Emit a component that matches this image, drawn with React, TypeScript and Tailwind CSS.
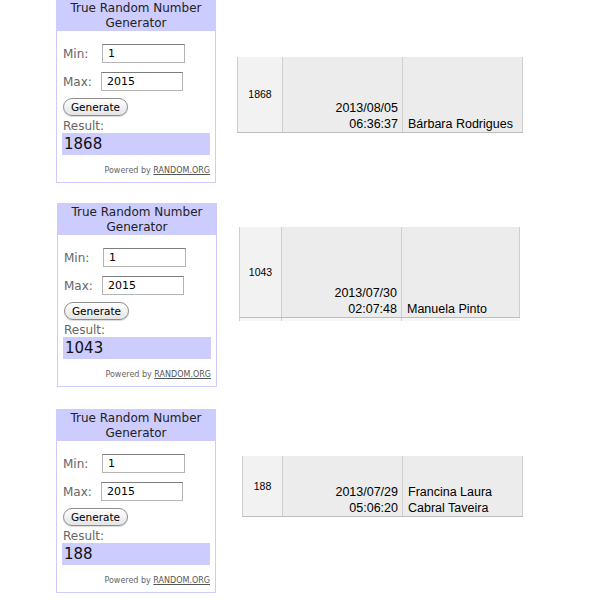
import React from "react";

type W = { min: string; max: string; result: string; minLbl: number; maxLbl: number };

function Widget({ min, max, result, minLbl, maxLbl }: W) {
  return (
    <div className="w-[160px] h-[184px] border border-[#ccccff] bg-white flex flex-col font-['DejaVu_Sans',sans-serif] shrink-0">
      <div className="bg-[#ccccff] h-[31px] pt-[1px] text-center text-[12px] leading-[15px] text-[#222]">
        True Random Number
        <br />
        Generator
      </div>
      <div className="flex items-center pl-[6px] mt-[13px] h-[19px]">
        <div className="text-[12px] text-[#666] shrink-0" style={{ width: minLbl }}>
          Min:
        </div>
        <div className="w-[83px] h-[19px] border border-[#b4b4b4] border-t-[#7d7d7d] bg-white text-[11px] leading-[17px] pl-[5px] text-black">
          {min}
        </div>
      </div>
      <div className="flex items-center pl-[6px] mt-[9px] h-[19px]">
        <div className="text-[12px] text-[#666] shrink-0" style={{ width: maxLbl }}>
          Max:
        </div>
        <div className="w-[82px] h-[19px] border border-[#b4b4b4] border-t-[#7d7d7d] bg-white text-[11px] leading-[17px] pl-[5px] text-black">
          {max}
        </div>
      </div>
      <div className="pl-[6px] mt-[7px]">
        <div className="w-[65px] h-[18px] rounded-full border border-[#8e8e8e] bg-gradient-to-b from-white to-[#e4e4e4] text-center text-[10.5px] leading-[16px] text-black shadow-[0_1px_1px_rgba(0,0,0,0.15)]">
          Generate
        </div>
      </div>
      <div className="pl-[6px] mt-[3px] text-[12px] leading-[14px] text-[#666]">Result:</div>
      <div className="ml-[5px] w-[148px] h-[22px] bg-[#ccccff] text-[15px] leading-[22px] pl-[2px] text-[#111]">
        {result}
      </div>
      <div className="ml-[5px] w-[148px] mt-[11px] text-right text-[8px] leading-[10px] text-[#666]">
        Powered by <span className="underline text-[#555]">RANDOM.ORG</span>
      </div>
    </div>
  );
}

type T = {
  num: string;
  date: string;
  time: string;
  name: React.ReactNode;
  c1: number;
  c3: number;
  h: number;
  stub?: boolean;
};

function Sheet({ num, date, time, name, c1, c3, h, stub }: T) {
  return (
    <div className="flex flex-col font-['Liberation_Sans',Arial,sans-serif] text-black">
      <div className="flex border-b border-[#bdbdbd]" style={{ height: h + 1 }}>
        <div
          className="border-l border-r border-[#cfcfcf] bg-[#f2f2f2] flex items-center justify-center text-[10.5px] pt-[1px]"
          style={{ width: c1 }}
        >
          {num}
        </div>
        <div className="w-[120px] border-r border-[#cfcfcf] bg-[#ececec] flex flex-col justify-end items-end pr-[4px] text-[12.5px] leading-[16px]">
          <div>{date}</div>
          <div>{time}</div>
        </div>
        <div
          className="border-r border-[#cfcfcf] bg-[#ececec] flex flex-col justify-end pl-[5px] text-[12.5px] leading-[16px]"
          style={{ width: c3 }}
        >
          {name}
        </div>
      </div>
      {stub && (
        <div className="flex h-[3px]">
          <div className="border-l border-r border-[#cfcfcf] bg-[#f7f7f7]" style={{ width: c1 }} />
          <div className="w-[120px] border-r border-[#cfcfcf] bg-[#f7f7f7]" />
          <div className="bg-[#f7f7f7]" style={{ width: c3 }} />
        </div>
      )}
    </div>
  );
}

export default function App() {
  return (
    <div className="w-[600px] h-[600px] bg-white overflow-hidden flex flex-col">
      <div className="h-[203px] flex items-start pl-[56px] shrink-0">
        <div className="mt-[-1px]">
          <Widget min="1" max="2015" result="1868" minLbl={39} maxLbl={38} />
        </div>
        <div className="ml-[21px] mt-[57px]">
          <Sheet
            num="1868"
            date="2013/08/05"
            time="06:36:37"
            name={<div>Bárbara Rodrigues</div>}
            c1={46}
            c3={120}
            h={75}
          />
        </div>
      </div>
      <div className="h-[206px] flex items-start pl-[57px] shrink-0">
        <Widget min="1" max="2015" result="1043" minLbl={39} maxLbl={38} />
        <div className="ml-[22px] mt-[24px]">
          <Sheet
            num="1043"
            date="2013/07/30"
            time="02:07:48"
            name={<div>Manuela Pinto</div>}
            c1={43}
            c3={118}
            h={90}
            stub
          />
        </div>
      </div>
      <div className="flex items-start pl-[56px] shrink-0">
        <Widget min="1" max="2015" result="188" minLbl={39} maxLbl={38} />
        <div className="ml-[26px] mt-[47px]">
          <Sheet
            num="188"
            date="2013/07/29"
            time="05:06:20"
            name={
              <>
                <div>Francina Laura</div>
                <div>Cabral Taveira</div>
              </>
            }
            c1={41}
            c3={120}
            h={60}
          />
        </div>
      </div>
    </div>
  );
}
